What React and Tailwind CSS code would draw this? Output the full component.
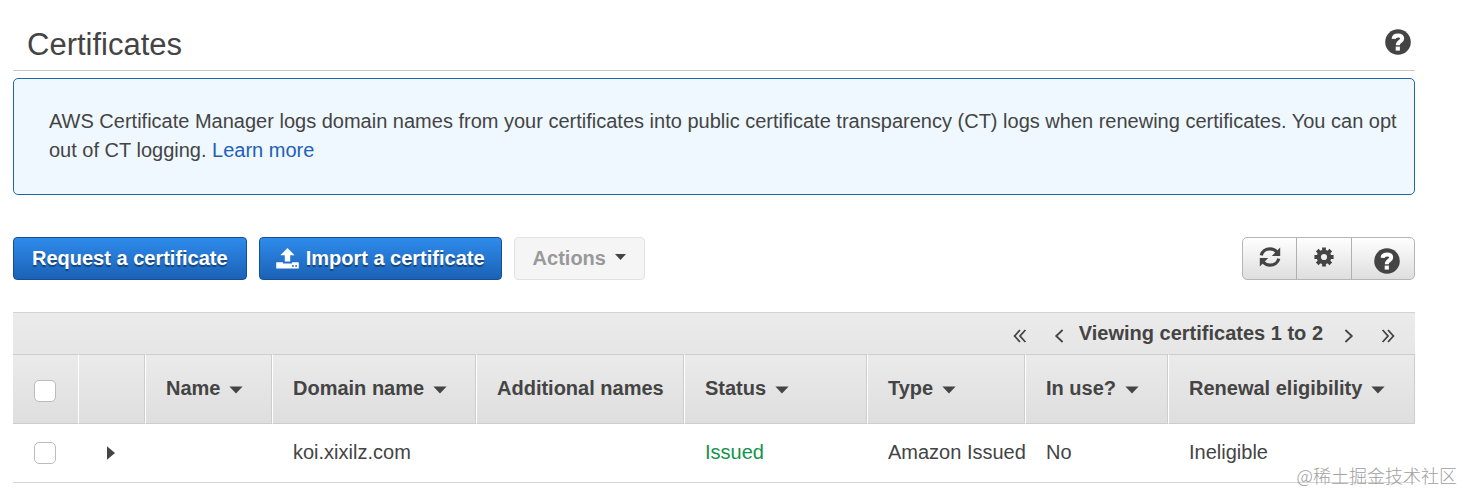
import React from 'react';

function QuestionIcon() {
  return (
    <svg width="26" height="26" viewBox="0 0 26 26" aria-hidden="true">
      <circle cx="13" cy="13" r="12.8" fill="#444" />
      <path
        d="M8.6 9.8 C8.8 7.2 10.6 6.4 13.1 6.4 C15.5 6.4 17.2 7.6 17.2 9.4 C17.2 12.6 12.8 12 12.8 16.2"
        fill="none"
        stroke="#fff"
        strokeWidth="4"
      />
      <rect x="10.7" y="17.6" width="4.2" height="4" fill="#fff" />
    </svg>
  );
}

function RefreshIcon() {
  return (
    <svg width="22" height="22" viewBox="0 0 22 22" aria-hidden="true">
      <g fill="none" stroke="#444" strokeWidth="3.2">
        <path d="M2.2 9.4 C3.2 5.4 6.8 2.9 11 2.9 C13.8 2.9 16.2 4 17.8 6" />
        <path d="M19.8 12.6 C18.8 16.6 15.2 19.1 11 19.1 C8.2 19.1 5.8 18 4.2 16" />
      </g>
      <path d="M21.2 1.6 V10 H12.8 Z M.8 20.4 V12 H9.2 Z" fill="#444" />
    </svg>
  );
}

function GearIcon() {
  return (
    <svg width="20" height="20" viewBox="0 0 20 20" aria-hidden="true">
      <g stroke="#444" strokeWidth="3.8">
        <path d="M10 .4 V5 M10 15 V19.6 M.4 10 H5 M15 10 H19.6" />
        <path d="M3.2 3.2 L6.4 6.4 M13.6 13.6 L16.8 16.8 M16.8 3.2 L13.6 6.4 M6.4 13.6 L3.2 16.8" />
      </g>
      <circle cx="10" cy="10" r="5.2" fill="none" stroke="#444" strokeWidth="4.2" />
    </svg>
  );
}

function UploadIcon() {
  return (
    <svg width="23" height="21" viewBox="0 0 23 21" aria-hidden="true">
      <path
        d="M11.5 0 L18.6 7.2 H14.2 V13.6 H8.8 V7.2 H4.4 Z M.8 14.2 H7 V15.6 H16 V14.2 H22.2 Q22.8 14.2 22.8 15 V19.7 Q22.8 20.6 22 20.6 H1 Q.2 20.6 .2 19.7 V15 Q.2 14.2 .8 14.2 Z"
        fill="#fff"
      />
      <path d="M16 17.2 h1.8 v1.6 h-1.8 Z M19.2 17.2 h1.8 v1.6 h-1.8 Z" fill="#1f62b4" />
    </svg>
  );
}

function Chevrons({ double, right }) {
  return (
    <svg
      width="14"
      height="14"
      viewBox="0 0 14 14"
      fill="none"
      stroke="#444"
      strokeWidth="1.8"
      className={right ? 'rotate-180' : ''}
      aria-hidden="true"
    >
      {double ? <path d="M7 1 L1.6 7 L7 13 M12.4 1 L7 7 L12.4 13" /> : <path d="M10.6 1 L4.2 7 L10.6 13" />}
    </svg>
  );
}

function SortCaret() {
  return (
    <svg width="14" height="8" viewBox="0 0 14 8" className="mt-1" aria-hidden="true">
      <path d="M.4 .4 H13.6 L7 7.6 Z" fill="#444" />
    </svg>
  );
}

const columns = [
  { title: 'Name', width: 'w-[127px]', sortable: true },
  { title: 'Domain name', width: 'w-[204px]', sortable: true },
  { title: 'Additional names', width: 'w-[208px]', sortable: false },
  { title: 'Status', width: 'w-[183px]', sortable: true },
  { title: 'Type', width: 'w-[158px]', sortable: true },
  { title: 'In use?', width: 'w-[143px]', sortable: true },
  { title: 'Renewal eligibility', width: '', sortable: true },
];

const checkbox =
  'block size-[22px] appearance-none rounded-[5px] border border-[#bbb] bg-white checked:bg-[#2b7de0]';
const primary =
  'flex h-[43px] items-center rounded-[4px] border border-[#144f91] bg-linear-to-b from-[#2f8bec] to-[#1b62b6] font-bold text-white text-shadow-[0_2px_1px_rgb(0_0_0/0.4)]';

export default function App() {
  return (
    <main className="relative bg-white pt-[26px] pr-12 pb-[10px] pl-[13px] font-['Liberation_Sans',Arial,sans-serif] text-[20px] leading-[29px] text-[#444]">
      <header className="flex h-[45px] items-start justify-between border-b border-[#c8c8c8] pr-1 pl-[14px]">
        <h1 className="text-[31px] leading-[37px]">Certificates</h1>
        <button type="button" aria-label="Help" className="mt-[3px]">
          <QuestionIcon />
        </button>
      </header>

      <section className="mt-[7px] rounded-[5px] border border-[#1f66ac] bg-[#eff8ff] pt-7 pr-2 pb-[29px] pl-[35px]">
        <p>
          AWS Certificate Manager logs domain names from your certificates into public certificate transparency (CT)
          logs when renewing certificates. You can opt out of CT logging.{' '}
          <a href="#learn-more" className="text-[#1f5fb8]">
            Learn more
          </a>
        </p>
      </section>

      <div className="mt-[42px] flex items-center justify-between">
        <div className="flex gap-3">
          <button type="button" className={primary + ' px-[18px]'}>
            Request a certificate
          </button>
          <button type="button" className={primary + ' gap-[7px] px-4'}>
            <UploadIcon />
            Import a certificate
          </button>
          <button
            type="button"
            className="flex h-[43px] items-center gap-[9px] rounded-[4px] border border-[#e2e2e2] bg-[#f5f5f5] px-[18px] font-bold text-[#999]"
          >
            Actions
            <svg width="11" height="6" viewBox="0 0 11 6" className="mb-1" aria-hidden="true">
              <path d="M0 0 H11 L5.5 6 Z" fill="#444" />
            </svg>
          </button>
        </div>
        <div className="flex h-[43px] divide-x divide-[#b0b0b0] rounded-[5px] border border-[#b5b5b5] bg-linear-to-b from-white to-[#dedede]">
          <button type="button" aria-label="Refresh" className="flex w-[54px] items-center justify-center pb-1">
            <RefreshIcon />
          </button>
          <button type="button" aria-label="Settings" className="flex w-[55px] items-center justify-center pb-1">
            <GearIcon />
          </button>
          <button type="button" aria-label="Help" className="flex w-[62px] items-center justify-center pt-1 pl-2">
            <QuestionIcon />
          </button>
        </div>
      </div>

      <nav className="mt-8 flex h-[42px] items-center justify-end border-t border-[#d2d2d2] bg-linear-to-b from-[#ebebeb] to-[#e6e6e6] pr-5">
        <button type="button" aria-label="First page" className="mt-1">
          <Chevrons double />
        </button>
        <button type="button" aria-label="Previous page" className="mt-1 ml-[25px]">
          <Chevrons />
        </button>
        <span className="mr-[19px] ml-[13px] font-bold">Viewing certificates 1 to 2</span>
        <button type="button" aria-label="Next page" className="mt-1">
          <Chevrons right />
        </button>
        <button type="button" aria-label="Last page" className="mt-1 ml-[25px]">
          <Chevrons double right />
        </button>
      </nav>

      <table className="w-full table-fixed border-separate border-spacing-0 text-left whitespace-nowrap">
        <thead>
          <tr className="h-[70px] bg-linear-to-b from-[#ebebeb] to-[#dedede]">
            <th className="w-[65px] border-t border-b border-[#cdcdcd] pt-1 pl-[21px]">
              <input type="checkbox" aria-label="Select all certificates" className={checkbox} />
            </th>
            <th className="w-[67px] border border-[#cdcdcd] border-l-white" />
            {columns.map((c) => (
              <th key={c.title} className={c.width + ' border border-[#cdcdcd] border-l-white pb-[2px] pl-5'}>
                {c.sortable ? (
                  <button type="button" className="flex items-center gap-[9px]">
                    {c.title}
                    <SortCaret />
                  </button>
                ) : (
                  c.title
                )}
              </th>
            ))}
          </tr>
        </thead>
        <tbody>
          <tr className="h-[59px] *:border-b *:border-[#d5d5d5]">
            <td className="pl-[21px]">
              <input type="checkbox" aria-label="Select koi.xixilz.com" className={checkbox} />
            </td>
            <td className="pl-[29px]">
              <button type="button" aria-label="Expand details" className="block">
                <svg width="8" height="14" viewBox="0 0 8 14" aria-hidden="true">
                  <path d="M0 .3 L8 7 L0 13.7 Z" fill="#444" />
                </svg>
              </button>
            </td>
            <td />
            <td className="pb-[2px] pl-[21px]">koi.xixilz.com</td>
            <td />
            <td className="pb-[2px] pl-[21px] text-[#14934a]">Issued</td>
            <td className="pb-[2px] pl-[21px]">Amazon Issued</td>
            <td className="pb-[2px] pl-[21px]">No</td>
            <td className="pb-[2px] pl-[21px]">Ineligible</td>
          </tr>
        </tbody>
      </table>

      <span className="absolute right-[6px] bottom-[3px] font-['Noto_Sans_CJK_SC',sans-serif] text-[18px] leading-[29px] font-light text-[#a0a0a0]">
        @稀土掘金技术社区
      </span>
    </main>
  );
}
